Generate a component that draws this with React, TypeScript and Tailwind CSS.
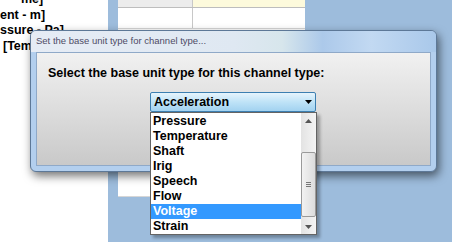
const items = ["Pressure", "Temperature", "Shaft", "Irig", "Speech", "Flow", "Voltage", "Strain"];

function Tri({ down = true, color = "#000" }: { down?: boolean; color?: string }) {
  return (
    <svg width="7" height="4" viewBox="0 0 7 4">
      <path d={down ? "M0 0h7L3.5 4z" : "M0 4h7L3.5 0z"} fill={color} />
    </svg>
  );
}

function DropList() {
  return (
    <div className="absolute left-0 top-[20px] flex h-[123px] w-[167px] border border-[#646464] bg-white shadow-[3px_3px_3px_rgba(0,0,0,0.3)]">
      <div className="flex flex-1 flex-col pt-[1px]">
        {items.map((it) => (
          <div
            key={it}
            className={
              it === "Voltage"
                ? "h-[15px] bg-[#3399ff] pl-[2px] leading-[15px] text-white"
                : "h-[15px] pl-[2px] leading-[15px] text-black"
            }
          >
            {it}
          </div>
        ))}
      </div>
      {/* scrollbar */}
      <div className="flex w-[15px] flex-col bg-[linear-gradient(to_right,#e3e3e3,#f4f4f4)]">
        <div className="flex h-[15px] items-center justify-center">
          <Tri down={false} color="#555" />
        </div>
        <div className="mt-[24px] flex h-[65px] items-center justify-center rounded-[2px] border border-[#9a9a9a] bg-[linear-gradient(to_right,#f2f2f2,#dcdcdc)]">
          <div className="flex flex-col gap-[1px]">
            <div className="h-px w-[5px] bg-[#777]" />
            <div className="h-px w-[5px] bg-[#777]" />
            <div className="h-px w-[5px] bg-[#777]" />
          </div>
        </div>
        <div className="mt-auto flex h-[15px] items-center justify-center">
          <Tri color="#555" />
        </div>
      </div>
    </div>
  );
}

export default function App() {
  return (
    <div className="relative h-[242px] w-[452px] overflow-hidden bg-[#9dbcdc] font-['Liberation_Sans',Arial,sans-serif] text-[12.5px] font-bold">
      {/* fond : panneau gauche, grille */}
      <div className="flex h-full">
        <div className="flex w-[108px] flex-col whitespace-nowrap bg-white pt-0 leading-[15.5px] text-black">
          <div className="-mt-[8px] pl-[21px]">me]</div>
          <div>ent - m]</div>
          <div>ssure - Pa]</div>
          <div className="pl-[3px]">[Temperature - C]</div>
        </div>
        <div className="w-[10px]" />
        <div className="flex h-[197px] w-[187px] flex-col bg-white">
          <div className="flex h-[8px] border-b border-[#bdbdbd]">
            <div className="w-[75px] border-r border-[#c8c8c8] bg-[#ececec]" />
            <div className="flex-1 bg-[#fdfadc]" />
          </div>
          <div className="flex h-[21px] border-b border-[#d6d6d6]">
            <div className="w-[75px] border-r border-[#c8c8c8]" />
            <div className="flex-1" />
          </div>
          <div className="flex-1 border-b border-[#d6d6d6]" />
        </div>
      </div>

      {/* fenêtre de dialogue */}
      <div className="absolute left-[30px] top-[30px] flex h-[142px] w-[407px] flex-col rounded-[6px] border border-[#5d7897] bg-[#b3cfee] shadow-[2px_4px_10px_rgba(0,0,0,0.55)]">
        <div className="flex h-[21px] items-center rounded-t-[5px] bg-[linear-gradient(to_right,#e6ecf5_0%,#dfe8f2_50%,#d7e6ec_62%,#acc9ea_72%,#c2d9f2_84%,#a9c8ea_100%)] pl-[5px] font-['Liberation_Sans',Arial,sans-serif] text-[9.5px] font-normal text-[#4e4b66]">
          Set the base unit type for channel type...
        </div>
        <div className="mx-[5px] mb-[5px] flex flex-1 flex-col border border-[#8fa9c8] bg-[linear-gradient(to_bottom,#f1f1f1,#c9c9c9)] pl-[11px] pt-[13px]">
          <div className="leading-[15px] text-black">Select the base unit type for this channel type:</div>
          <div className="relative ml-[102px] mt-[11px] w-[166px]">
            <div className="flex h-[20px] items-center justify-between rounded-[2px] border border-[#3c7fb1] bg-[linear-gradient(to_bottom,#e6f4fc,#bfe3f7_50%,#a2d2f0)] pl-[3px] pr-[3px] text-black">
              <span>Acceleration</span>
              <Tri />
            </div>
            <DropList />
          </div>
        </div>
      </div>
    </div>
  );
}
